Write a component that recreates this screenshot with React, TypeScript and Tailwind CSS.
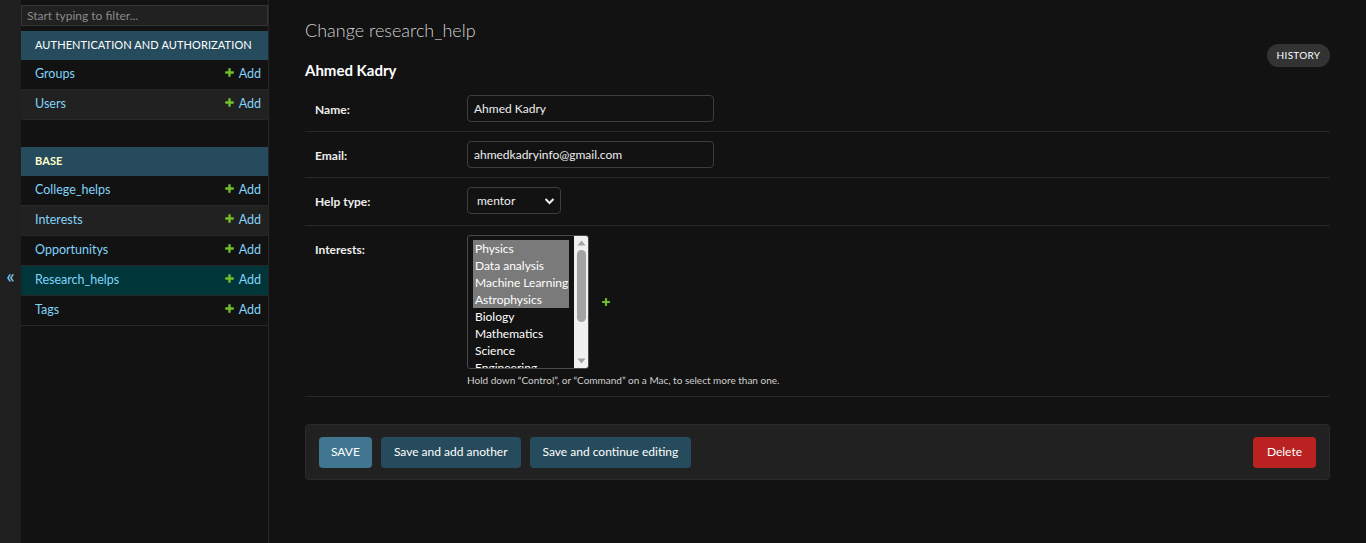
import React from "react";

const PLUS_D =
  "M1600 796v192q0 40-28 68t-68 28h-416v416q0 40-28 68t-68 28h-192q-40 0-68-28t-28-68v-416h-416q-40 0-68-28t-28-68v-192q0-40 28-68t68-28h416v-416q0-40 28-68t68-28h192q40 0 68 28t28 68v416h416q40 0 68 28t28 68z";

function Plus({ size = 10 }: { size?: number }) {
  return (
    <svg width={size} height={size} viewBox="0 0 1792 1792" aria-hidden>
      <path fill="#70bf2b" d={PLUS_D} />
    </svg>
  );
}

type Model = { name: string; selected?: boolean };

function ModuleBlock({ title, current, models }: { title: string; current?: boolean; models: Model[] }) {
  return (
    <div className="mb-[27px]">
      <div
        className={
          "h-[29px] flex items-center pl-[14px] bg-[#264b5d] text-[11px] tracking-[0.1px] uppercase whitespace-nowrap " +
          (current ? "text-[#ffffcc] font-bold" : "text-white")
        }
      >
        {title}
      </div>
      {models.map((m, i) => (
        <div
          key={m.name}
          className={
            "h-[30px] flex items-center justify-between pl-[14px] pr-[7px] border-b border-[#272727] text-[12.5px] " +
            (m.selected ? "bg-[#00363a]" : i % 2 === 1 ? "bg-[#212121]" : "bg-[#121212]")
          }
        >
          <span className="text-[#81d4fa]">{m.name}</span>
          <span className="flex items-center gap-[4px] text-[#81d4fa]">
            <span className="-mt-[4px]">
              <Plus size={11} />
            </span>
            Add
          </span>
        </div>
      ))}
    </div>
  );
}

const interests = [
  { name: "Physics", sel: true },
  { name: "Data analysis", sel: true },
  { name: "Machine Learning", sel: true },
  { name: "Astrophysics", sel: true },
  { name: "Biology" },
  { name: "Mathematics" },
  { name: "Science" },
  { name: "Engineering" },
];

const inputCls =
  "w-[247px] h-[27px] border border-[#3d3d3d] rounded-[4px] bg-[#121212] flex items-center px-[6px] text-[12px] text-[#eeeeee]";

function Label({ children }: { children: React.ReactNode }) {
  return <div className="w-[152px] shrink-0 pt-[6px] text-[12px] font-bold text-[#eeeeee]">{children}</div>;
}

export default function App() {
  return (
    <div
      className="h-[543px] bg-[#121212] flex text-[#eeeeee] overflow-hidden"
      style={{ fontFamily: "Lato, 'Noto Sans', sans-serif" }}
    >
      {/* toggle */}
      <div className="w-[21px] shrink-0 bg-[#1f1f1f] flex items-center justify-center text-[#81d4fa] text-[20px] leading-none pt-[7px]">
        «
      </div>
      {/* sidebar */}
      <nav className="w-[248px] shrink-0 border-r border-[#272727] bg-[#121212]">
        <div className="py-[5px]">
          <div className="h-[21px] border border-[#353535] bg-[#212121] flex items-center px-[5px] text-[12px] text-[#8a8a8a]">
            Start typing to filter...
          </div>
        </div>
        <ModuleBlock
          title="Authentication and Authorization"
          models={[{ name: "Groups" }, { name: "Users" }]}
        />
        <ModuleBlock
          title="Base"
          current
          models={[
            { name: "College_helps" },
            { name: "Interests" },
            { name: "Opportunitys" },
            { name: "Research_helps", selected: true },
            { name: "Tags" },
          ]}
        />
      </nav>
      {/* content */}
      <main className="flex-1 px-[36px] pt-[18px]">
        <h1 className="text-[18px] leading-[24px] font-light text-[#d0d0d0]">Change research_help</h1>
        <div className="flex justify-between items-start">
          <h2 className="mt-[18px] text-[15px] leading-[20px] font-bold text-white">Ahmed Kadry</h2>
          <button className="mt-[2px] h-[23px] w-[63px] rounded-full bg-[#333333] text-[10px] tracking-[0.3px] text-white uppercase">
            History
          </button>
        </div>
        <div className="mt-[6px]">
          <div className="flex items-start pl-[10px] pt-[9px] pb-[9px] border-b border-[#272727]">
            <Label>Name:</Label>
            <div className={inputCls}>Ahmed Kadry</div>
          </div>
          <div className="flex items-start pl-[10px] pt-[9px] pb-[9px] border-b border-[#272727]">
            <Label>Email:</Label>
            <div className={inputCls}>ahmedkadryinfo@gmail.com</div>
          </div>
          <div className="flex items-start pl-[10px] pt-[9px] pb-[11px] border-b border-[#272727]">
            <Label>Help type:</Label>
            <div className="w-[94px] h-[27px] border border-[#3d3d3d] rounded-[4px] bg-[#121212] flex items-center justify-between pl-[9px] pr-[5px] text-[12px] text-[#eeeeee]">
              <span>mentor</span>
              <svg width="11" height="8" viewBox="0 0 11 8">
                <polyline points="1.5,2 5.5,6 9.5,2" fill="none" stroke="#eeeeee" strokeWidth="2" />
              </svg>
            </div>
          </div>
          <div className="flex items-start pl-[10px] pt-[9px] pb-[9px] border-b border-[#272727]">
            <Label>Interests:</Label>
            <div>
              <div className="flex items-center">
                <div className="w-[122px] h-[134px] border border-[#4a4a4a] rounded-[3px] bg-[#121212] flex overflow-hidden">
                  <div className="flex-1 pl-[5px] pr-[5px] pt-[4px] overflow-hidden">
                    {interests.map((it) => (
                      <div
                        key={it.name}
                        className={
                          "h-[17px] leading-[17px] pl-[2px] text-[12px] whitespace-nowrap text-white " +
                          (it.sel ? "bg-[#7a7a7a]" : "")
                        }
                      >
                        {it.name}
                      </div>
                    ))}
                  </div>
                  <div className="w-[14px] bg-[#f0f0f0] flex flex-col items-center justify-between py-[4px]">
                    <svg width="9" height="6" viewBox="0 0 9 6">
                      <polygon points="0.5,5.5 4.5,0.5 8.5,5.5" fill="#a3a3a3" />
                    </svg>
                    <div className="flex-1 w-full flex justify-center pt-[4px] pb-[36px]">
                      <div className="w-[9px] h-full rounded-full bg-[#a3a3a3]" />
                    </div>
                    <svg width="9" height="6" viewBox="0 0 9 6">
                      <polygon points="0.5,0.5 8.5,0.5 4.5,5.5" fill="#a3a3a3" />
                    </svg>
                  </div>
                </div>
                <span className="ml-[12px]">
                  <Plus size={10} />
                </span>
              </div>
              <div className="mt-[5px] text-[10px] leading-[13px] text-[#d0d0d0]">
                Hold down “Control”, or “Command” on a Mac, to select more than one.
              </div>
            </div>
          </div>
        </div>
        <div className="mt-[27px] h-[56px] border border-[#2a2a2a] rounded-[4px] bg-[#212121] flex items-center px-[13px]">
          <button className="h-[31px] px-[12px] rounded-[4px] bg-[#417690] text-[12px] text-white">SAVE</button>
          <button className="ml-[9px] h-[31px] px-[13px] rounded-[4px] bg-[#264b5d] text-[12px] text-white">
            Save and add another
          </button>
          <button className="ml-[9px] h-[31px] px-[13px] rounded-[4px] bg-[#264b5d] text-[12px] text-white">
            Save and continue editing
          </button>
          <div className="flex-1" />
          <button className="h-[31px] px-[14px] rounded-[4px] bg-[#ba2121] text-[12px] text-white">Delete</button>
        </div>
      </main>
    </div>
  );
}
